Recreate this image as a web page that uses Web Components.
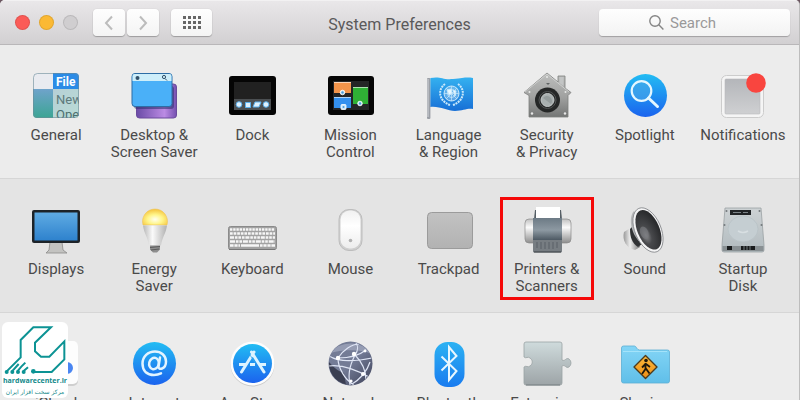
<!DOCTYPE html>
<html lang="en">
<head>
<meta charset="utf-8">
<title>System Preferences</title>
<style>
    body {
        margin: 0;
        height: 100vh;
        overflow: hidden;
        background: #6b5560;
        font-family: Roboto, "Liberation Sans", sans-serif;
        color: #4a4a4a;
    }
</style>
</head>
<body>

<pref-window>
    <pref-toolbar slot="toolbar" title="System Preferences"></pref-toolbar>

    <pref-row>
        <pref-pane label="General">
            <svg viewBox="0 0 48 48">
                <defs>
                    <linearGradient id="gen" x1="0" y1="0" x2="0" y2="1"><stop offset="0" stop-color="#6fa3cb"/><stop offset="1" stop-color="#3aa592"/></linearGradient>
                    <linearGradient id="gen2" x1="0" y1="0" x2="1" y2="1"><stop offset="0" stop-color="#b6cfd6"/><stop offset="1" stop-color="#b9dcd6"/></linearGradient>
                    <clipPath id="genClip"><rect x="1" y="1" width="46" height="45" rx="4"/></clipPath>
                </defs>
                <g clip-path="url(#genClip)" font-family="Roboto, sans-serif">
                    <rect width="48" height="48" fill="#e9ebf0"/>
                    <rect x="1" y="17" width="21" height="30" fill="url(#gen)"/>
                    <rect x="21" y="17" width="27" height="30" fill="url(#gen2)"/>
                    <rect x="21" y="0" width="27" height="17" fill="#2b8be6"/>
                    <text x="24" y="14" font-size="12" font-weight="700" fill="#fff">File</text>
                    <text x="24" y="32" font-size="13" fill="#5d7a7c">New</text>
                    <text x="24" y="47" font-size="13" fill="#4c6e6e">Ope</text>
                </g>
                <rect x="1.500" y="1.500" width="45" height="44" rx="4" fill="none" stroke="#6d8c98" stroke-opacity=".6"/>
            </svg>
        </pref-pane>
        <pref-pane label="Desktop &amp;&#10;Screen Saver">
            <svg viewBox="0 0 48 48">
                <defs>
                    <linearGradient id="desk" x1="0" y1="0" x2="1" y2="0"><stop offset="0" stop-color="#6a4ba6"/><stop offset=".7" stop-color="#bb8be4"/><stop offset="1" stop-color="#7550b0"/></linearGradient>
                </defs>
                <rect x="6.500" y="12" width="40" height="34" rx="3" fill="url(#desk)" stroke="#6a4a9c"/>
                <rect x="4" y="14" width="40" height="23" rx="3" fill="#2a2d6a" opacity=".55"/>
                <rect x="2" y="1.500" width="40" height="33" rx="3" fill="#4ab0f8" stroke="#2d6da5"/>
                <path d="M2.500 9V4a2 2 0 0 1 2-2h35a2 2 0 0 1 2 2v5z" fill="#cdeefa"/>
                <circle cx="7.500" cy="6" r="2" fill="#31516b"/>
                <circle cx="34" cy="5" r="1.600" fill="none" stroke="#31516b"/>
                <path d="M35 6.500l2 2" stroke="#31516b"/>
            </svg>
        </pref-pane>
        <pref-pane label="Dock">
            <svg viewBox="0 0 48 48">
                <rect x="1" y="4" width="47" height="39" rx="3" fill="#050505"/>
                <rect x="6" y="10" width="37" height="28" fill="#212121"/>
                <rect x="6" y="27" width="37" height="11" fill="#4b4f52"/>
                <g fill="#dff1fd" stroke="#5ab0ee">
                    <circle cx="11" cy="32.500" r="2.800"/>
                    <path d="M17.500 30.500h5v5h-5z"/>
                    <path d="M27 30h6l-2 5h-6z"/>
                    <circle cx="38" cy="32.500" r="2.800"/>
                </g>
            </svg>
        </pref-pane>
        <pref-pane label="Mission&#10;Control">
            <svg viewBox="0 0 48 48">
                <rect x="2" y="4" width="46" height="39" rx="3" fill="#060606"/>
                <rect x="7" y="9" width="36" height="29" fill="#242526"/>
                <rect x="8" y="10" width="17" height="11" fill="#f3944a"/>
                <rect x="8" y="25" width="17" height="11" fill="#3490ee"/>
                <rect x="27" y="15" width="15" height="17" fill="#2fb035"/>
                <path d="M8 10.500h17M27 15.500h15M8 25.500h17" stroke="#fff" stroke-opacity=".6"/>
                <g fill="#cfe9fb" stroke="#fff" stroke-width=".8">
                    <circle cx="16.500" cy="20.500" r="2.300"/><circle cx="34" cy="31.500" r="2.300"/><rect x="15" y="32.500" width="5" height="5" rx="1"/>
                </g>
                <g fill="#4c9bd8"><circle cx="16.500" cy="20.500" r="1.200"/><circle cx="34" cy="31.500" r="1.200"/><circle cx="17.500" cy="35" r="1"/></g>
            </svg>
        </pref-pane>
        <pref-pane label="Language&#10;&amp; Region">
            <svg viewBox="0 0 48 48">
                <defs><linearGradient id="flag" x1="0" y1="0" x2="0" y2="1"><stop offset="0" stop-color="#34b1f0"/><stop offset="1" stop-color="#176fd6"/></linearGradient></defs>
                <rect x="2" y="6" width="3.400" height="41" rx="1" fill="#9b9fa6"/>
                <path d="M3 7v38" stroke="#d4d6da"/>
                <path d="M5.400 6C16 4 17 8 28 7s13-2 20-1v31c-6-1-10 2-18 2S15 34 5.400 35z" fill="url(#flag)"/>
                <g fill="none" stroke="#c9e8fb">
                    <circle cx="26.500" cy="21.500" r="7.500" fill="#fff" fill-opacity=".28"/>
                    <circle cx="26.500" cy="21.500" r="4" stroke-width=".8"/>
                    <path d="M19 21.500h15M26.500 14v15M21 16l11 11M32 16L21 27" stroke-width=".7"/>
                    <path d="M20 12c-8 6-6 17 5 21M33 12c8 6 6 17-5 21" stroke-width="2" stroke-dasharray="2 .8"/>
                    <path d="M22 18l4-1 1 4-3 2zM28 18l3 1-1 5z" fill="#e9f8ff"/>
                </g>
            </svg>
        </pref-pane>
        <pref-pane label="Security&#10;&amp; Privacy">
            <svg viewBox="0 0 48 48">
                <defs><linearGradient id="house" x1="0" y1="0" x2="0" y2="1"><stop offset="0" stop-color="#bdbebd"/><stop offset=".55" stop-color="#a0a1a0"/><stop offset="1" stop-color="#747675"/></linearGradient></defs>
                <path d="M24 1l11 9V4h7v12l6 4.500-3 3V45H6V23.500l-5-3z" fill="url(#house)" stroke="#7f807f" stroke-width=".8"/>
                <path d="M2 20L24 2l22 18" fill="none" stroke="#d6d7d6" stroke-width=".8"/>
                <path d="M36.500 5h4v9l-4-3z" fill="#c3c5c5"/>
                <circle cx="24.500" cy="28" r="12.500" fill="#252727"/>
                <circle cx="24.500" cy="28" r="8.500" fill="none" stroke="#515454"/>
                <circle cx="24.500" cy="28" r="6.500" fill="#a9b0b0" stroke="#c3c8c8"/>
                <path d="M20 26a5 5 0 0 1 8 6z" fill="#949c9c"/>
                <g fill="#e7e8e7"><circle cx="24" cy="5" r="1"/><circle cx="6.500" cy="20" r="1"/><circle cx="42.500" cy="20" r="1"/><circle cx="9" cy="41.500" r="1.200"/><circle cx="42" cy="41.500" r="1.200"/></g>
                <path d="M23 11h4l-2 2z" fill="#5f6262"/>
            </svg>
        </pref-pane>
        <pref-pane label="Spotlight">
            <svg viewBox="0 0 48 48">
                <defs><linearGradient id="blue" x1="0" y1="0" x2="0" y2="1"><stop offset="0" stop-color="#22bcf3"/><stop offset="1" stop-color="#1b63ee"/></linearGradient></defs>
                <circle cx="24.500" cy="23.500" r="21.500" fill="url(#blue)"/>
                <circle cx="20.500" cy="19" r="9.800" fill="#4da8e8" fill-opacity=".55" stroke="#e4f7ff" stroke-width="2.200"/>
                <path d="M27.500 26l9 8.500" stroke="#e4f7ff" stroke-width="3" stroke-linecap="round"/>
            </svg>
        </pref-pane>
        <pref-pane label="Notifications">
            <svg viewBox="0 0 48 48">
                <defs><linearGradient id="note" x1="0" y1="0" x2="0" y2="1"><stop offset="0" stop-color="#b4b6ba"/><stop offset="1" stop-color="#cfd0d2"/></linearGradient></defs>
                <rect x="2.500" y="3.500" width="42" height="42" rx="5" fill="#f5f5f5" stroke="#cccccc"/>
                <rect x="6" y="7" width="35" height="35" rx="1" fill="url(#note)" stroke="#b9babc" stroke-width=".6"/>
                <circle cx="37" cy="11" r="9.800" fill="#f9453f"/>
            </svg>
        </pref-pane>
    </pref-row>

    <pref-row shaded>
        <pref-pane label="Displays">
            <svg viewBox="0 0 48 48">
                <defs><linearGradient id="disp" x1="0" y1="0" x2="0" y2="1"><stop offset="0" stop-color="#5fabe3"/><stop offset="1" stop-color="#2e82cd"/></linearGradient></defs>
                <path d="M18 36h12l1 8 4 3H14l3-3z" fill="#c3c3c1" stroke="#8c8c8a" stroke-width=".8"/>
                <rect x="0" y="4" width="48" height="33" rx="2" fill="#1d2328"/>
                <rect x="2.500" y="6.500" width="43" height="28" fill="url(#disp)"/>
            </svg>
        </pref-pane>
        <pref-pane label="Energy&#10;Saver">
            <svg viewBox="0 0 48 48">
                <defs>
                    <radialGradient id="bulb" cx=".5" cy=".65" r=".6"><stop offset="0" stop-color="#fffff0"/><stop offset=".5" stop-color="#fff58a"/><stop offset="1" stop-color="#f6c843"/></radialGradient>
                    <linearGradient id="bulb2"><stop offset="0" stop-color="#b7b7b7"/><stop offset=".4" stop-color="#fafafa"/><stop offset="1" stop-color="#b0b0b0"/></linearGradient>
                </defs>
                <path d="M13 19a12.500 12.500 0 1 1 24 0z" fill="url(#bulb)" stroke="#efc55d" stroke-width=".6"/>
                <path d="M13 19.500h24c-1 8-5 12-6 20H19c-1-8-5-12-6-20z" fill="url(#bulb2)"/>
                <path d="M20 39.500h10v4l-3 3h-4l-3-3z" fill="#8e8e8e"/>
                <path d="M20 41.500l10-1M21 44l8-1" stroke="#5c5c5c"/>
            </svg>
        </pref-pane>
        <pref-pane label="Keyboard">
            <svg viewBox="0 0 48 48">
                <rect x=".5" y="20.500" width="48" height="23" rx="2" fill="#a2a2a2" stroke="#8b8b8b"/>
                <path d="M1 43.500h46" stroke="#777"/>
                <g stroke="#f6f6f6" stroke-width="2.600">
                    <path d="M2 23.500h45" stroke-dasharray="2.400 .8"/>
                    <path d="M2 27.500h45" stroke-dasharray="2.700 .9"/>
                    <path d="M2 31.500h45" stroke-dasharray="4 .9 2.600 .9 2.600 .9 2.600 .9"/>
                    <path d="M2 35.500h45" stroke-dasharray="5 .9 2.600 .9 2.600 .9"/>
                    <path d="M2 39.500h10M13 39.500h18M32 39.500h15"/>
                </g>
                <path d="M6 38v3M10 38v3M35 38v3M39 38v3M43 38v3" stroke="#a2a2a2" stroke-width=".8"/>
            </svg>
        </pref-pane>
        <pref-pane label="Mouse">
            <svg viewBox="0 0 48 48">
                <defs><linearGradient id="mouse" x1="0" y1="0" x2="0" y2="1"><stop offset="0" stop-color="#f1f1f1"/><stop offset=".4" stop-color="#fff"/><stop offset="1" stop-color="#ededed"/></linearGradient></defs>
                <rect x="13" y="3.500" width="23" height="41" rx="10" fill="#cfcfcf" stroke="#bdbdbd"/>
                <rect x="14.500" y="4.500" width="20" height="38" rx="9" fill="url(#mouse)"/>
                <circle cx="24.500" cy="34.500" r="1.800" fill="#b2b2b2"/>
            </svg>
        </pref-pane>
        <pref-pane label="Trackpad">
            <svg viewBox="0 0 48 48">
                <defs><linearGradient id="pad" x1="0" y1="0" x2="0" y2="1"><stop offset="0" stop-color="#c2c2c2"/><stop offset="1" stop-color="#b2b2b2"/></linearGradient></defs>
                <rect x="2.500" y="6.500" width="45" height="36" rx="4" fill="url(#pad)" stroke="#9b9b9b"/>
            </svg>
        </pref-pane>
        <pref-pane label="Printers &amp;&#10;Scanners" highlighted>
            <svg viewBox="0 0 48 48">
                <defs>
                    <linearGradient id="roll" x1="0" y1="0" x2="0" y2="1"><stop offset="0" stop-color="#c0c0c0"/><stop offset=".35" stop-color="#fbfbfb"/><stop offset="1" stop-color="#8d8d8d"/></linearGradient>
                    <linearGradient id="feed" x1="0" y1="0" x2="0" y2="1"><stop offset="0" stop-color="#6c7a85"/><stop offset=".35" stop-color="#8d99a2"/><stop offset=".65" stop-color="#4a5660"/><stop offset="1" stop-color="#6d747a"/></linearGradient>
                </defs>
                <rect x="2" y="13" width="46" height="24" rx="4" fill="url(#roll)" stroke="#8b8b8b" stroke-width=".7"/>
                <path d="M11 13l1-9h26l1 9z" fill="#555e65"/>
                <rect x="13" y="1" width="24" height="12" fill="#fff"/>
                <path d="M10 12h29v33a1.500 1.500 0 0 1-1.500 1.500h-26A1.500 1.500 0 0 1 10 45z" fill="url(#feed)"/>
                <path d="M10 34h29v11H10z" fill="#777d82"/>
                <path d="M14 36v6M18 36v7M22 36v7M26 36v7M30 36v7M34 36v6" stroke="#5b6166"/>
                <path d="M11 46h27" stroke="#44494d"/>
            </svg>
        </pref-pane>
        <pref-pane label="Sound">
            <svg viewBox="0 0 48 48">
                <defs>
                    <radialGradient id="cone" cx=".3" cy=".6" r=".65"><stop offset="0" stop-color="#8c8d90"/><stop offset=".35" stop-color="#48494c"/><stop offset="1" stop-color="#2a2b2d"/></radialGradient>
                    <linearGradient id="magnet"><stop offset="0" stop-color="#999"/><stop offset=".4" stop-color="#ededed"/><stop offset="1" stop-color="#777"/></linearGradient>
                </defs>
                <path d="M3 26l8-5 8 20-5 3C5 42 1 34 3 26z" fill="url(#magnet)"/>
                <path d="M9 23c0 8 2 14 8 18l4-3-9-18z" fill="#303234"/>
                <path d="M13 5c-6 6-5 28 17 40z" fill="#b4b5b7"/>
                <g transform="rotate(-23 27 24)">
                    <ellipse cx="27" cy="24" rx="13" ry="23.500" fill="#f4f4f5" stroke="#85878a" stroke-width=".8"/>
                    <ellipse cx="27.500" cy="24" rx="11" ry="21" fill="url(#cone)"/>
                    <ellipse cx="22.500" cy="25" rx="4" ry="6.500" fill="#77797d" opacity=".7"/>
                </g>
            </svg>
        </pref-pane>
        <pref-pane label="Startup&#10;Disk">
            <svg viewBox="0 0 48 48">
                <defs><linearGradient id="disk" x1="0" y1="0" x2="0" y2="1"><stop offset="0" stop-color="#cdd2d4"/><stop offset="1" stop-color="#b2bbbf"/></linearGradient></defs>
                <path d="M6 2h36l3 37v5a2 2 0 0 1-2 2H5a2 2 0 0 1-2-2v-5z" fill="url(#disk)" stroke="#9aa1a3" stroke-width=".8"/>
                <path d="M3.500 40h41v5h-41z" fill="#899093"/>
                <ellipse cx="24" cy="23" rx="15" ry="13" fill="#c5ced2" stroke="#b8c1c5" stroke-width=".8"/>
                <path d="M19 25q5 3 10 0" fill="none" stroke="#d8dfe2" stroke-width="1.500"/>
                <rect x="11" y="4" width="21" height="5" fill="#202325"/>
                <path d="M14 6.500h8M24 6.500h5" stroke="#7d8488"/>
                <path d="M8 40h5v4H8zM22 40h14v4H22z" fill="#191b1c"/>
                <path d="M25 40v4M28 40v4M31 40v4" stroke="#737a7d"/>
                <g fill="#73797c"><circle cx="7.500" cy="5" r="1"/><circle cx="40.500" cy="5" r="1"/><circle cx="5.500" cy="19" r="1"/><circle cx="42.500" cy="19" r="1"/></g>
            </svg>
        </pref-pane>
    </pref-row>

    <pref-row>
        <pref-pane label="iCloud">
            <svg viewBox="0 0 48 48">
                <rect x="2" y="2" width="44" height="44" rx="5" fill="#cfcfcf"/>
                <rect x="2" y="1" width="44" height="43" rx="5" fill="#fdfdfd"/>
                <path d="M12 34a7 7 0 0 1 1-13 9 9 0 0 1 17-2 6 6 0 0 1 5 3 6 6 0 0 1 0 12z" fill="#4a86f2"/>
            </svg>
        </pref-pane>
        <pref-pane label="Internet&#10;Accounts">
            <svg viewBox="0 0 48 48">
                <circle cx="24.500" cy="23.500" r="21.500" fill="url(#blue)"/>
                <g fill="none" stroke="#e2f4ff" stroke-width="2.500" stroke-linecap="round">
                    <ellipse cx="24" cy="23.500" rx="4.800" ry="5.800" transform="rotate(15 24 23.500)"/>
                    <path d="M30 17.500l-1.500 9c-.5 4 7.500 3 7.500-5 0-6-5-10-11-10-7 0-12.500 5-12.500 12 0 8 5 11.500 11.500 11.500 3 0 5-.6 7-1.600"/>
                </g>
            </svg>
        </pref-pane>
        <pref-pane label="App Store">
            <svg viewBox="0 0 48 48">
                <circle cx="24.500" cy="24.500" r="22" fill="#cbcbcb"/>
                <circle cx="24.500" cy="23.500" r="22" fill="#fdfdfd"/>
                <circle cx="24.500" cy="23.500" r="19.500" fill="url(#blue)"/>
                <g fill="none" stroke="#ddf3ff" stroke-width="3" stroke-linecap="round">
                    <path d="M26 12L13.500 32M23.500 12L36 32"/>
                    <path d="M11 24.500h8M22 24.500h5M31 24.500h7" stroke-linecap="butt"/>
                </g>
                <path d="M22 15l6 9" stroke="#35a5ef" stroke-width=".8"/>
            </svg>
        </pref-pane>
        <pref-pane label="Network">
            <svg viewBox="0 0 48 48">
                <defs>
                    <linearGradient id="net" x1="0" y1="0" x2="1" y2="1"><stop offset="0" stop-color="#747c95"/><stop offset=".5" stop-color="#737b96"/><stop offset="1" stop-color="#3c4057"/></linearGradient>
                    <clipPath id="netClip"><circle cx="24.500" cy="23.500" r="21.500"/></clipPath>
                </defs>
                <circle cx="24.500" cy="23.500" r="22" fill="url(#net)"/>
                <g clip-path="url(#netClip)">
                    <path d="M3 14C10 2 36-2 45 14 37 9 12 9 3 14z" fill="#a7aec3" opacity=".65"/>
                    <path d="M3 22c5 6 9 9 15 11l2 12C8 42 2 34 3 22z" fill="#3b3f52"/>
                    <g fill="none" stroke="#dfe5f5" stroke-width="1.200">
                        <path d="M2 15c6 5 20 8 44 3M12 18C17 10 26 4 33 4M29 15c4-6 3-9 1-12M12 18c0 10 7 22 16 27M29 15c-6 12-7 20-5 30M29 15c8 8 11 15 11 25M3 26c14-2 28 4 42 12M26 44c7-4 15-12 18-22M40 10c-10 8-22 8-28 8"/>
                    </g>
                    <g fill="#fff"><circle cx="12" cy="18" r="2.200"/><circle cx="28" cy="14" r="2.200"/><circle cx="37" cy="34" r="2"/><circle cx="25" cy="41" r="1.600"/><circle cx="39" cy="11" r="1.400"/></g>
                </g>
            </svg>
        </pref-pane>
        <pref-pane label="Bluetooth">
            <svg viewBox="0 0 48 48">
                <defs><linearGradient id="blueTooth" x1="0" y1="0" x2="0" y2="1"><stop offset="0" stop-color="#2cb2f3"/><stop offset="1" stop-color="#197bef"/></linearGradient></defs>
                <rect x="9.500" y="2" width="30" height="45" rx="13" fill="url(#blueTooth)"/>
                <path d="M16.500 16.500l15 14.500-7.500 9V7l7.500 9-15 14.500" fill="none" stroke="#e8f7ff" stroke-width="2"/>
            </svg>
        </pref-pane>
        <pref-pane label="Extensions">
            <svg viewBox="0 0 48 48">
                <defs><linearGradient id="ext" x1="0" y1="0" x2="0" y2="1"><stop offset="0" stop-color="#cfdbdc"/><stop offset="1" stop-color="#9da4a7"/></linearGradient></defs>
                <path d="M3 2h34a2 2 0 0 1 2 2v16c3 2 4-3 7-1a5 5 0 0 1 0 8c-3 2-4-3-7-1v17a2 2 0 0 1-2 2H3a2 2 0 0 1-2-2V27c2-2 4 1 6-1 3-2 3-6 0-8-2-2-4 1-6-1V4a2 2 0 0 1 2-2z" fill="url(#ext)" stroke="#9aa3a5" stroke-width=".8"/>
                <path d="M3 45h34" stroke="#757d80"/>
            </svg>
        </pref-pane>
        <pref-pane label="Sharing">
            <svg viewBox="0 0 48 48">
                <defs>
                    <linearGradient id="folder" x1="0" y1="0" x2="0" y2="1"><stop offset="0" stop-color="#84d5f6"/><stop offset="1" stop-color="#60bfe9"/></linearGradient>
                    <linearGradient id="sign" x1="0" y1="0" x2="0" y2="1"><stop offset="0" stop-color="#fab93b"/><stop offset="1" stop-color="#ee8f17"/></linearGradient>
                </defs>
                <path d="M.5 8a2 2 0 0 1 2-2h11c2 0 2 4 5 4h28a2 2 0 0 1 2 2v29a2 2 0 0 1-2 2h-44a2 2 0 0 1-2-2z" fill="url(#folder)" stroke="#5aafd4" stroke-width=".8"/>
                <path d="M2 11.500h44" stroke="#a4e3fa"/>
                <path d="M24.500 15.500L36 27 24.500 38.500 13 27z" fill="url(#sign)" stroke="#4b3a1d" stroke-width="1.400" stroke-linejoin="round"/>
                <circle cx="25" cy="20.500" r="1.800" fill="#20190c"/>
                <path d="M24.500 23v6l-3.500 5M24.500 28l4 5.500M24.500 24l-3.500 3.500M25 24l4 3" fill="none" stroke="#20190c" stroke-width="1.800"/>
            </svg>
        </pref-pane>
    </pref-row>

    <site-badge slot="badge">
        <span>hardwarecenter.ir</span>
        <span slot="tagline" lang="fa" dir="rtl">مرکز سخت افزار ایران</span>
    </site-badge>
</pref-window>

<script>
class PrefWindow extends HTMLElement {
    connectedCallback() {
        this.attachShadow({ mode: 'open' });
        this.shadowRoot.innerHTML = `
            <style>
                :host {
                    display: flex;
                    flex-direction: column;
                    position: relative;
                    height: 100%;
                    box-sizing: border-box;
                    background: #ececec;
                    border-right: 1px solid #bdbdbd;
                    border-radius: 5px 5px 0 0;
                    overflow: hidden;
                }

                main {
                    flex: 1;
                    min-height: 0;
                    overflow: hidden;
                }
            </style>
            <slot name="toolbar"></slot>
            <main><slot></slot></main>
            <slot name="badge"></slot>
        `;
    }
}

class PrefToolbar extends HTMLElement {
    connectedCallback() {
        this.attachShadow({ mode: 'open' });
        this.render();
    }

    render() {
        const title = this.getAttribute('title') || '';

        this.shadowRoot.innerHTML = `
            <style>
                :host {
                    display: grid;
                    grid-template-columns: 1fr auto 1fr;
                    align-items: center;
                    height: 45px;
                    box-sizing: border-box;
                    padding: 0 9px;
                    background: linear-gradient(#e9e7e9, #d2d0d2);
                    border-top: 1px solid #f2f1f2;
                    border-bottom: 1px solid #b9b7b9;
                }

                .controls, .lights, .nav {
                    display: flex;
                    align-items: center;
                }

                .controls { gap: 12px; }
                .lights { gap: 9px; margin: 0 3px 0 6px; }
                .nav { gap: 2px; }

                button {
                    display: flex;
                    align-items: center;
                    justify-content: center;
                    padding: 0;
                    border: 0;
                    width: 32px;
                    height: 27px;
                    border-radius: 4px;
                    background: linear-gradient(#fefefe, #f4f4f4);
                    box-shadow: 0 1px 1px rgba(0, 0, 0, 0.25), 0 0 1px rgba(0, 0, 0, 0.2);
                }

                .lights button {
                    width: 15px;
                    height: 15px;
                    border-radius: 50%;
                    background: var(--light);
                    box-shadow: inset 0 0 0 1px rgba(0, 0, 0, 0.1);
                }

                .all { width: 41px; }

                h1 {
                    margin: 0;
                    padding-top: 4px;
                    font-size: 16px;
                    line-height: 20px;
                    font-weight: 400;
                    color: #5a595a;
                }

                label {
                    justify-self: end;
                    display: flex;
                    align-items: center;
                    gap: 6px;
                    box-sizing: border-box;
                    width: 191px;
                    height: 27px;
                    padding-left: 50px;
                    border-radius: 4px;
                    background: linear-gradient(#fefefe, #f3f3f3);
                    box-shadow: 0 1px 1px rgba(0, 0, 0, 0.25);
                }

                input {
                    flex: 1;
                    min-width: 0;
                    padding: 0;
                    border: 0;
                    outline: 0;
                    background: none;
                    font: 15px/20px Roboto, "Liberation Sans", sans-serif;
                    color: #4a4a4a;
                }

                input::placeholder { color: #9a999a; opacity: 1; }
            </style>
            <div class="controls">
                <div class="lights">
                    <button aria-label="Close" style="--light: #fb5b57"></button>
                    <button aria-label="Minimize" style="--light: #fbb934"></button>
                    <button aria-label="Zoom" style="--light: #d0ced0"></button>
                </div>
                <div class="nav">
                    <button aria-label="Back"><svg width="10" height="16" viewBox="0 0 10 16" fill="none" stroke="#bcbcbc" stroke-width="2"><path d="M8 1.500L2 8l6 6.500"/></svg></button>
                    <button aria-label="Forward"><svg width="10" height="16" viewBox="0 0 10 16" fill="none" stroke="#bcbcbc" stroke-width="2"><path d="M2 1.500L8 8l-6 6.500"/></svg></button>
                </div>
                <button class="all" aria-label="Show All"><svg width="18" height="13" viewBox="0 0 18 13" stroke="#666" stroke-width="3" stroke-dasharray="3 2"><path d="M0 1.500h18M0 6.500h18M0 11.500h18"/></svg></button>
            </div>
            <h1>${title}</h1>
            <label>
                <svg width="15" height="15" viewBox="0 0 15 15" fill="none" stroke="#858585" stroke-width="1.400" aria-hidden="true"><circle cx="6" cy="6" r="5.200"/><path d="M9.800 9.800l4.600 4.600"/></svg>
                <input type="text" placeholder="Search" aria-label="Search">
            </label>
        `;
    }
}

class PrefRow extends HTMLElement {
    connectedCallback() {
        this.attachShadow({ mode: 'open' });
        this.shadowRoot.innerHTML = `
            <style>
                :host {
                    display: grid;
                    grid-template-columns: repeat(8, 1fr);
                    box-sizing: border-box;
                    min-height: 134px;
                    padding: 0 7px;
                    border-bottom: 1px solid #d6d6d6;
                }

                :host([shaded]) { background: #e4e4e4; }
            </style>
            <slot></slot>
        `;
    }
}

class PrefPane extends HTMLElement {
    connectedCallback() {
        this.attachShadow({ mode: 'open' });
        this.render();
    }

    render() {
        const label = this.getAttribute('label') || '';

        this.shadowRoot.innerHTML = `
            <style>
                :host {
                    display: grid;
                    position: relative;
                }

                button {
                    display: flex;
                    flex-direction: column;
                    align-items: center;
                    gap: 7px;
                    padding: 27px 0 0;
                    border: 0;
                    background: none;
                    font: 15px/17px Roboto, "Liberation Sans", sans-serif;
                    color: inherit;
                }

                .label { white-space: pre; text-align: center; }

                ::slotted(svg) {
                    display: block;
                    width: 48px;
                    height: 48px;
                    overflow: visible;
                }

                /* red frame round the pane to click */
                :host([highlighted])::after {
                    content: '';
                    position: absolute;
                    inset: 18px 2px 12px;
                    border: 3px solid #f50808;
                    pointer-events: none;
                }
            </style>
            <button>
                <slot></slot>
                <span class="label"></span>
            </button>
        `;
        this.shadowRoot.querySelector('.label').textContent = label;
    }
}

class SiteBadge extends HTMLElement {
    connectedCallback() {
        this.attachShadow({ mode: 'open' });
        this.shadowRoot.innerHTML = `
            <style>
                :host {
                    display: flex;
                    flex-direction: column;
                    align-items: center;
                    position: absolute;
                    left: 2px;
                    bottom: 2px;
                    width: 66px;
                    padding-top: 2px;
                    border-radius: 6px;
                    box-sizing: border-box;
                    background: #fff;
                    color: #12898a;
                    font: 700 7px/10px "Open Sans", sans-serif;
                    white-space: nowrap;
                }

                .tagline { font: 6px/12px "DejaVu Sans", sans-serif; }
            </style>
            <svg width="64" height="52" viewBox="11 36 192 156" fill="none" stroke="#0c9394" stroke-width="6" aria-hidden="true">
                <path d="M22 178l42-42V84l38-38h53l-48 46v26l18 16h25l45-46v54l-38 38h-50"/>
                <path d="M38 178l20-22M54 178l12-14 12-12M72 178l14-12"/>
                <g fill="#0c9394" stroke="none"><circle cx="22" cy="180" r="6"/><circle cx="39" cy="180" r="6"/><circle cx="56" cy="180" r="6"/><circle cx="73" cy="180" r="6"/><circle cx="102" cy="178" r="7"/></g>
            </svg>
            <slot></slot>
            <slot name="tagline" class="tagline"></slot>
        `;
    }
}

customElements.define('pref-window', PrefWindow);
customElements.define('pref-toolbar', PrefToolbar);
customElements.define('pref-row', PrefRow);
customElements.define('pref-pane', PrefPane);
customElements.define('site-badge', SiteBadge);
</script>
</body>
</html>
